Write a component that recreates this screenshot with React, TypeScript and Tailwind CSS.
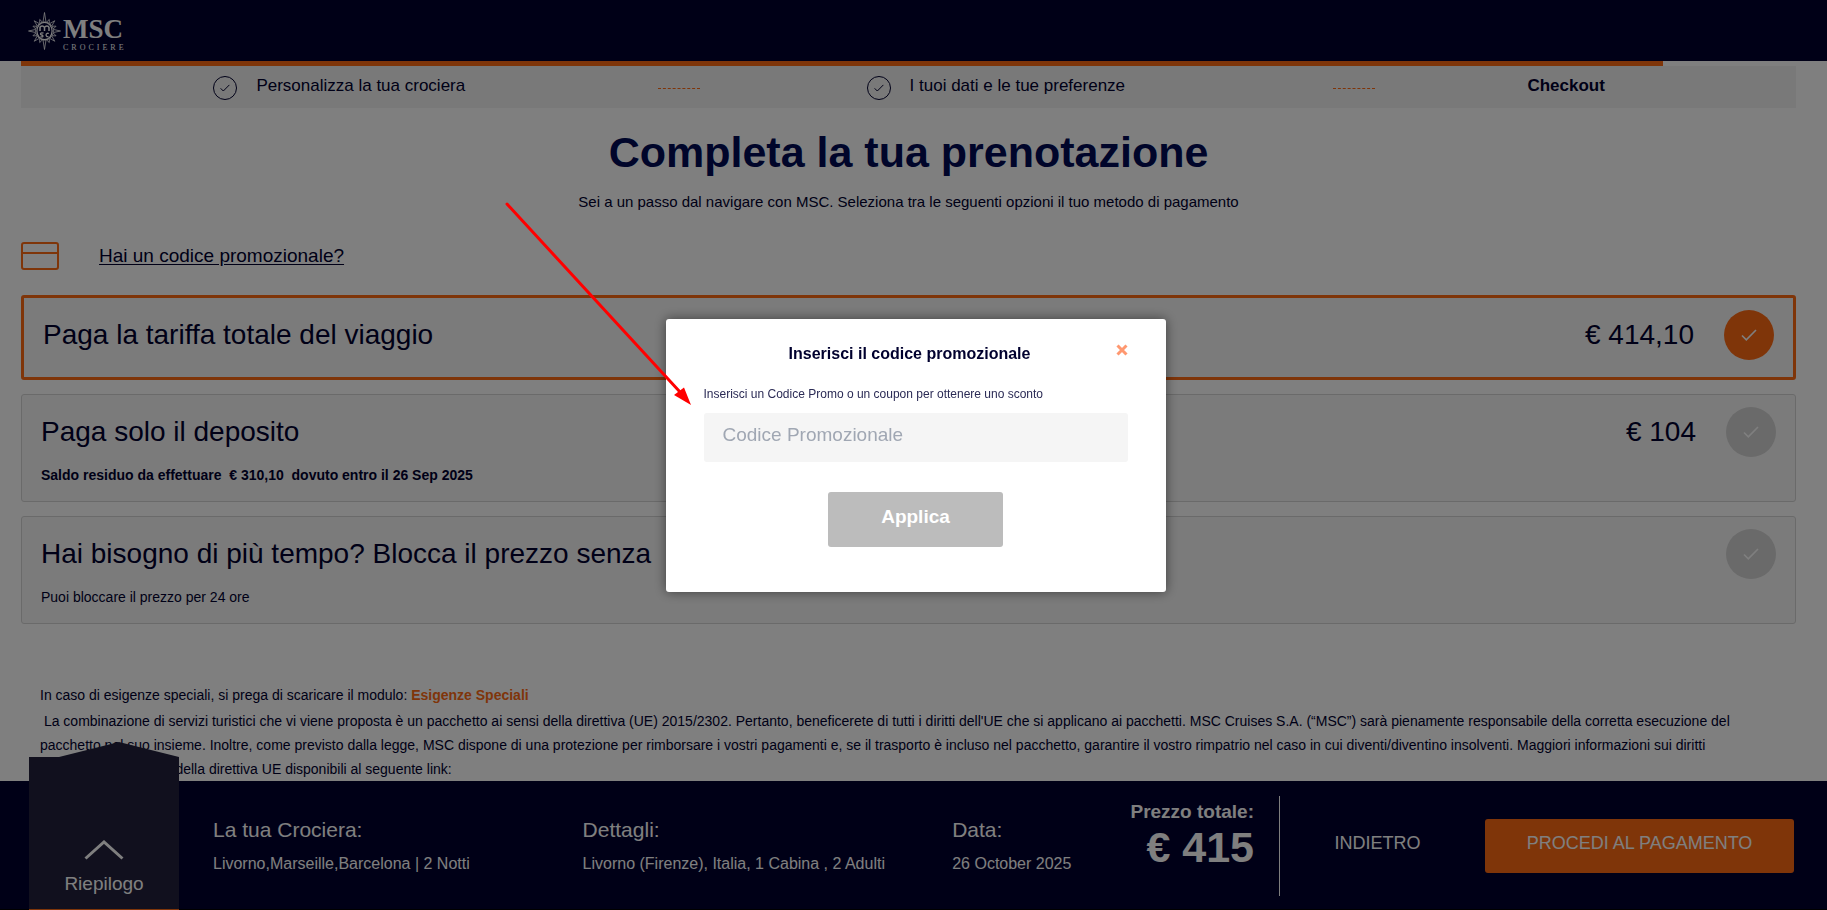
import { useState } from 'react';

type PaymentOption = {
  id: string;
  title: string;
  note?: string;
  strong?: boolean;
  price?: string;
};

const OPTIONS: PaymentOption[] = [
  { id: 'full', title: 'Paga la tariffa totale del viaggio', price: '€ 414,10' },
  {
    id: 'deposit',
    title: 'Paga solo il deposito',
    note: 'Saldo residuo da effettuare\u00a0 € 310,10\u00a0 dovuto entro il 26 Sep 2025',
    strong: true,
    price: '€ 104',
  },
  {
    id: 'hold',
    title: 'Hai bisogno di più tempo? Blocca il prezzo senza',
    note: 'Puoi bloccare il prezzo per 24 ore',
  },
];

const SUMMARY = [
  { label: 'La tua Crociera:', value: 'Livorno,Marseille,Barcelona | 2 Notti' },
  { label: 'Dettagli:', value: 'Livorno (Firenze), Italia, 1 Cabina , 2 Adulti' },
  { label: 'Data:', value: '26 October 2025' },
];

const RAYS = Array.from({ length: 16 }, (_, i) => i);

function Logo() {
  return (
    <a href="#" aria-label="MSC Crociere" className="flex items-center gap-0.5 text-white">
      <svg width="33" height="38" viewBox="-16.5 -19 33 38" fill="none" stroke="currentColor">
        {RAYS.map((i) => {
          const a = (i * Math.PI) / 8;
          const main = i % 4 === 0;
          const r = main ? (i % 8 === 0 ? 16 : 18.5) : i % 2 === 0 ? 14.5 : 12.5;
          const p = (rad: number, ang: number) => `${Math.cos(ang) * rad},${Math.sin(ang) * rad}`;
          return (
            <polygon
              key={i}
              points={`${p(9, a - 0.17)} ${p(r, a)} ${p(9, a + 0.17)}`}
              strokeWidth="0.8"
            />
          );
        })}
        <ellipse rx="7.6" ry="8.6" strokeWidth="1.2" />
        <path d="M-4.5 0V-4.5M-4.5-3.5C-4-5.5-1-5.5 0-3.5V0M0-3.5C1-5.5 4-5.5 4.5-3.5V0" strokeWidth="1.5" />
        <path d="M-1 2.2C-4 1-5 3.5-2.8 4C-0.5 4.5-1.5 6.6-4 5.6M4.3 2.5C1 1 .5 6.5 4 5.6" strokeWidth="1.3" />
      </svg>
      <span className="flex flex-col pt-2 font-['Liberation_Serif',serif]">
        <span className="text-[27px] font-bold leading-[26px]">MSC</span>
        <span className="text-[8px] leading-[12px] tracking-[3px]">CROCIERE</span>
      </span>
    </a>
  );
}

function CheckMark({ size }: { size: number }) {
  return (
    <svg width={size} height={size} viewBox="0 0 16 16" fill="none" stroke="currentColor" strokeWidth="1.6">
      <path d="M1 8.5L5.3 12.8L15 3" />
    </svg>
  );
}

function Step({ label }: { label: string }) {
  return (
    <div className="flex items-center justify-center gap-[19px]">
      <span className="mt-1 flex size-6 items-center justify-center rounded-full border border-[#00002e]">
        <CheckMark size={10} />
      </span>
      <span>{label}</span>
    </div>
  );
}

function Dashes() {
  return <span className="mt-1 w-[42px] justify-self-center border-t border-dashed border-[#ff6a13]" />;
}

function OptionCard({
  option,
  checked,
  onSelect,
}: {
  option: PaymentOption;
  checked: boolean;
  onSelect: () => void;
}) {
  return (
    <label
      className={
        checked
          ? 'flex items-start justify-between rounded-[3px] border-3 border-[#ff6a13] bg-[#f7f7f7] px-[19px] pt-3 pb-[17px]'
          : 'flex items-start justify-between rounded-[3px] border border-[#d4d4d4] bg-[#f7f7f7] px-[19px] pt-3 pb-3.5'
      }
    >
      <input type="radio" name="payment" checked={checked} onChange={onSelect} className="sr-only" />
      <span className="flex flex-col">
        <span className="text-[28px] leading-[50px]">{option.title}</span>
        {option.note && (
          <span className={option.strong ? 'mt-1.5 text-[14px] font-bold leading-6' : 'mt-1.5 text-[14px] leading-6'}>
            {option.note}
          </span>
        )}
      </span>
      <span className="flex items-center gap-[30px]">
        {option.price && <span className="text-[28px] leading-[50px]">{option.price}</span>}
        <span
          className={
            checked
              ? 'flex size-[50px] items-center justify-center rounded-full bg-[#ff6a13] text-white'
              : 'flex size-[50px] items-center justify-center rounded-full bg-[#d4d4d4] text-white'
          }
        >
          <CheckMark size={16} />
        </span>
      </span>
    </label>
  );
}

function PromoDialog() {
  const [code, setCode] = useState('');

  return (
    <div className="fixed inset-0 flex items-center justify-center bg-black/50 pl-1">
      <form
        role="dialog"
        aria-labelledby="promo-title"
        onSubmit={(e) => e.preventDefault()}
        className="relative flex w-[500px] flex-col rounded-[3px] bg-white px-[38px] pt-[23px] pb-[45px] shadow-[0_0_12px_rgba(0,0,0,0.5)]"
      >
        <button type="button" aria-label="Chiudi" className="absolute top-[25px] right-[38px] text-[#ff9870]">
          <svg width="12" height="12" viewBox="0 0 12 12" stroke="currentColor" strokeWidth="3">
            <path d="M1.5 1.5L10.5 10.5M10.5 1.5L1.5 10.5" />
          </svg>
        </button>
        <h2 id="promo-title" className="pr-3 text-center text-[16px] font-bold leading-6">
          Inserisci il codice promozionale
        </h2>
        <label htmlFor="promo" className="mt-[18px] text-[12px] leading-5 text-[#2b2b55]">
          Inserisci un Codice Promo o un coupon per ottenere uno sconto
        </label>
        <input
          id="promo"
          value={code}
          onChange={(e) => setCode(e.target.value)}
          placeholder="Codice Promozionale"
          className="mt-[9px] h-[49px] rounded-[3px] bg-[#f5f5f5] px-[19px] pb-1 text-[19px] placeholder:text-[#a0a7b3]"
        />
        <button
          type="submit"
          className="mt-[30px] h-[55px] w-[175px] self-center rounded-[3px] bg-[#bcbcbc] pb-1 text-[19px] font-bold text-white"
        >
          Applica
        </button>
      </form>
    </div>
  );
}

function SummaryBar() {
  return (
    <footer className="fixed inset-x-0 bottom-0 flex h-[129px] items-start border-b border-black bg-[#00002e] pl-[29px] pr-[33px] text-white">
      <button className="-mt-10 flex h-[169px] w-[150px] shrink-0 flex-col items-center">
        <svg viewBox="0 0 150 16" className="h-4 w-full shrink-0" fill="#22213d">
          <path d="M0 16L30 16L90 1L150 16Z" />
        </svg>
        <span className="flex w-full flex-1 flex-col items-center border-b border-[#ff6a13] bg-[#22213d] pt-[83px]">
          <svg width="40" height="20" viewBox="0 0 40 20" fill="none" stroke="currentColor" strokeWidth="3">
            <path d="M1.5 18.5L20 2L38.5 18.5" />
          </svg>
          <span className="mt-2.5 text-[19px] leading-7">Riepilogo</span>
        </span>
      </button>
      <dl className="ml-[34px] grid flex-1 grid-cols-[37fr_37fr_18fr] pt-[35px]">
        {SUMMARY.map((s) => (
          <div key={s.label}>
            <dt className="text-[21px] leading-7">{s.label}</dt>
            <dd className="mt-2 text-[16px] leading-6">{s.value}</dd>
          </div>
        ))}
      </dl>
      <p className="mt-[19px] flex w-[122px] shrink-0 flex-col items-end font-bold">
        <span className="whitespace-nowrap text-[19px] leading-6">Prezzo totale:</span>
        <span className="whitespace-nowrap text-[43px] leading-[46px]">€ 415</span>
      </p>
      <span className="mt-[15px] ml-[25px] h-[100px] border-l border-white" />
      <button className="mt-[38px] h-[54px] w-[205px] shrink-0 pb-1.5 pr-2.5 text-[18px]">INDIETRO</button>
      <button className="mt-[38px] h-[54px] w-[309px] shrink-0 rounded-[3px] bg-[#ff6a13] pb-1.5 text-[18px]">
        PROCEDI AL PAGAMENTO
      </button>
    </footer>
  );
}

export default function App() {
  const [selected, setSelected] = useState('full');

  return (
    <div className="h-screen overflow-hidden bg-white font-['Liberation_Sans',sans-serif] text-[#00002e]">
      <header className="flex h-[61px] items-center bg-[#00002e] pl-7">
        <Logo />
      </header>

      <main className="ml-[21px] mr-[31px]">
        <div className="h-[5px] w-[92.5%] bg-[#ff6a13]" />
        <nav className="grid h-[42px] grid-cols-[72fr_4fr_67fr_14fr_34fr_9fr] items-center bg-[#f3f3f3] pb-0.5 text-[17px] leading-6">
          <Step label="Personalizza la tua crociera" />
          <Dashes />
          <Step label="I tuoi dati e le tue preferenze" />
          <Dashes />
          <span className="text-center font-bold">Checkout</span>
        </nav>

        <h1 className="mt-4 text-center text-[43px] font-bold leading-[56px] text-[#000a55]">
          Completa la tua prenotazione
        </h1>
        <p className="mt-2.5 text-center text-[15px] leading-6">
          Sei a un passo dal navigare con MSC. Seleziona tra le seguenti opzioni il tuo metodo di pagamento
        </p>

        <div className="mt-7 flex items-center">
          <svg width="38" height="28" viewBox="0 0 38 28" fill="none" stroke="#ff6a13" strokeWidth="2">
            <rect x="1" y="1" width="36" height="26" rx="2" />
            <path d="M1 11H37" />
          </svg>
          <a href="#promo" className="ml-10 text-[19px] leading-7 underline underline-offset-2">
            Hai un codice promozionale?
          </a>
        </div>

        <div className="mt-[25px] flex flex-col gap-3.5">
          {OPTIONS.map((o) => (
            <OptionCard key={o.id} option={o} checked={o.id === selected} onSelect={() => setSelected(o.id)} />
          ))}
        </div>

        <div className="mt-[59px] px-[19px] text-[14px] leading-6">
          <p>
            In caso di esigenze speciali, si prega di scaricare il modulo:{' '}
            <a href="#" className="font-bold text-[#ff6a13]">
              Esigenze Speciali
            </a>
          </p>
          <p className="mt-0.5">
            &nbsp;La combinazione di servizi turistici che vi viene proposta è un pacchetto ai sensi della direttiva
            (UE) 2015/2302. Pertanto, beneficerete di tutti i diritti dell'UE che si applicano ai pacchetti. MSC
            Cruises S.A. (“MSC”) sarà pienamente responsabile della corretta esecuzione del pacchetto nel suo insieme.
            Inoltre, come previsto dalla legge, MSC dispone di una protezione per rimborsare i vostri pagamenti e, se
            il trasporto è incluso nel pacchetto, garantire il vostro rimpatrio nel caso in cui diventi/diventino
            insolventi. Maggiori informazioni sui diritti fondamentali ai sensi della direttiva UE disponibili al
            seguente link:
          </p>
        </div>
      </main>

      <SummaryBar />
      <PromoDialog />

      {/* pointer towards the promo field */}
      <svg
        width="190"
        height="208"
        viewBox="0 0 190 208"
        className="pointer-events-none fixed top-[200px] left-[504px]"
        fill="#ff0000"
      >
        <path d="M3 4L176 192" stroke="#ff0000" strokeWidth="3" strokeLinecap="round" />
        <path d="M187 205L170 195L180 187.500Z" />
      </svg>
    </div>
  );
}
